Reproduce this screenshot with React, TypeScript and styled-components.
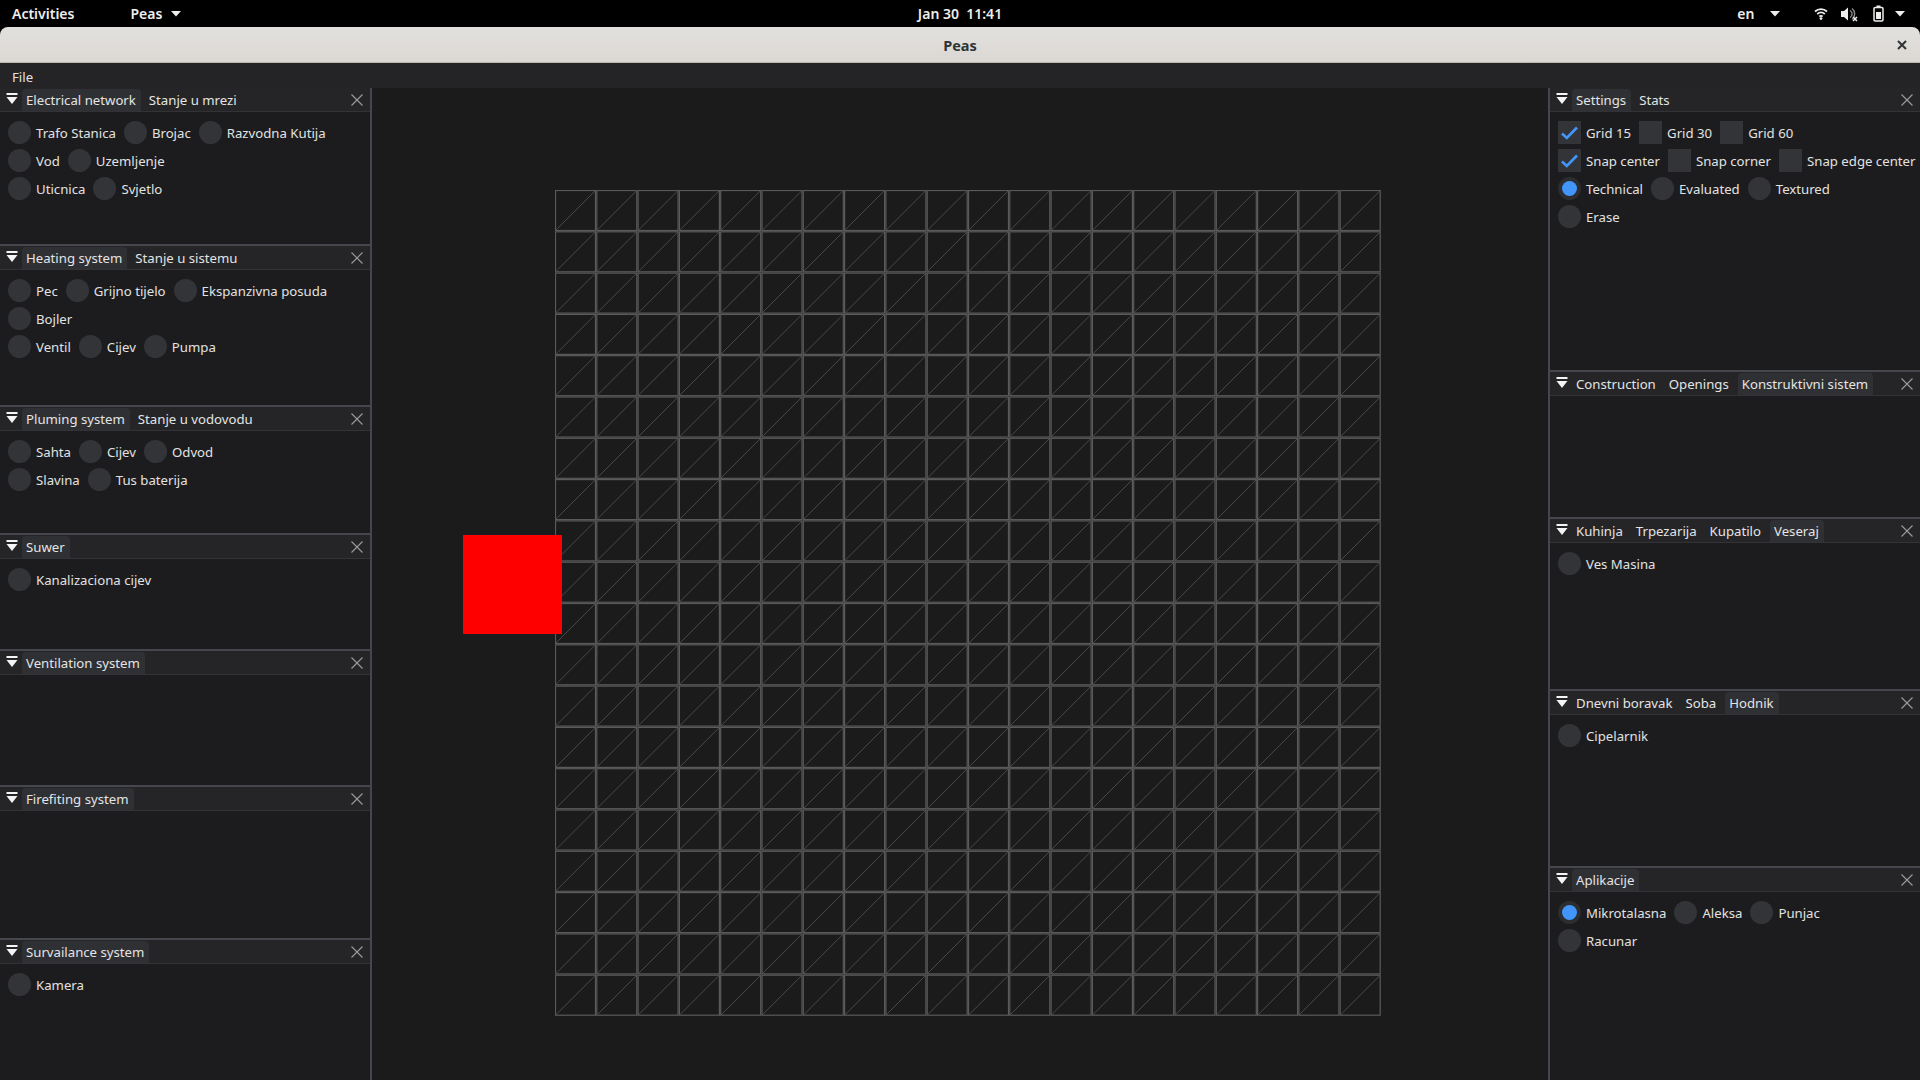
import React from "react";
import styled, { createGlobalStyle } from "styled-components";

const GlobalStyle = createGlobalStyle`
  html, body { margin: 0; padding: 0; background: #000; }
  body { font-family: "Noto Sans", "DejaVu Sans", sans-serif; }
  * { box-sizing: border-box; }
`;

const Screen = styled.div`
  width: 1920px;
  height: 1080px;
  display: flex;
  flex-direction: column;
  overflow: hidden;
  background: #000;
`;

const TopBar = styled.div`
  height: 27px;
  flex: none;
  display: grid;
  grid-template-columns: 1fr auto 1fr;
  align-items: center;
  color: #eeeeec;
  font-family: "Noto Sans", sans-serif;
  font-weight: 600;
  font-size: 14px;
`;

const TopLeft = styled.div`
  display: flex;
  align-items: center;
  padding-left: 12px;
  gap: 56px;
`;

const TopItem = styled.div`
  display: flex;
  align-items: center;
  gap: 5px;
  white-space: pre;
`;

const TopRight = styled.div`
  display: flex;
  align-items: center;
  justify-content: flex-end;
  padding-right: 15px;
`;

const TopGap = styled.div<{ $w: number }>`
  width: ${(p) => p.$w}px;
  flex: none;
`;

const Window = styled.div`
  flex: 1;
  display: flex;
  flex-direction: column;
  min-height: 0;
`;

const TitleBar = styled.div`
  height: 36px;
  flex: none;
  background: linear-gradient(#e2e0dd, #dbd8d4);
  border-radius: 8px 8px 0 0;
  border-bottom: 1px solid #bdb6af;
  display: grid;
  grid-template-columns: 1fr auto 1fr;
  align-items: center;
  color: #2e3436;
  font-family: "Noto Sans", sans-serif;
  font-weight: 700;
  font-size: 14.5px;
`;

const TitleClose = styled.div`
  justify-self: end;
  padding-right: 13px;
  display: flex;
  align-items: center;
`;

const MenuBar = styled.div`
  height: 25px;
  flex: none;
  background: #242426;
  display: flex;
  align-items: center;
  padding: 2px 0 0 12px;
  color: #e2e2e2;
  font-size: 13.2px;
`;

const Workspace = styled.div`
  flex: 1;
  display: flex;
  min-height: 0;
`;

const Dock = styled.div<{ $side: "left" | "right" }>`
  width: 372px;
  flex: none;
  display: flex;
  flex-direction: column;
  background: #1c1c1e;
  ${(p) =>
    p.$side === "left"
      ? "border-right: 2px solid #46464e;"
      : "border-left: 2px solid #46464e;"}
`;

const Panel = styled.section<{ $h?: number; $first?: boolean }>`
  ${(p) => (p.$h ? `height: ${p.$h}px; flex: none;` : "flex: 1;")}
  ${(p) => (p.$first ? "" : "border-top: 2px solid #46464e;")}
  display: flex;
  flex-direction: column;
  min-height: 0;
`;

const PanelHeader = styled.div`
  height: 24px;
  flex: none;
  background: #252527;
  border-bottom: 1px solid #333337;
  display: flex;
  align-items: flex-end;
  padding-left: 6px;
`;

const MenuButton = styled.div`
  width: 12px;
  height: 22px;
  margin-right: 4px;
  display: flex;
  align-items: center;
`;

const Tabs = styled.div`
  display: flex;
  gap: 4px;
  align-items: flex-end;
`;

const Tab = styled.div<{ $active?: boolean }>`
  height: 22px;
  line-height: 23px;
  padding: 0 5px 0 4px;
  border-radius: 4px 4px 0 0;
  background: ${(p) => (p.$active ? "#2f3034" : "transparent")};
  color: #e4e4e4;
  font-size: 13.2px;
  white-space: nowrap;
`;

const CloseButton = styled.div`
  margin-left: auto;
  margin-right: 7px;
  height: 22px;
  display: flex;
  align-items: center;
`;

const PanelBody = styled.div`
  padding: 9px 8px;
  display: flex;
  flex-direction: column;
  gap: 5px;
`;

const Row = styled.div`
  display: flex;
  align-items: center;
  gap: 8px;
  height: 23px;
`;

const Option = styled.div`
  display: flex;
  align-items: center;
  gap: 5px;
  color: #e2e2e2;
  font-size: 13.2px;
  white-space: nowrap;
`;

const RadioCircle = styled.div<{ $on?: boolean }>`
  width: 23px;
  height: 23px;
  border-radius: 50%;
  background: ${(p) => (p.$on ? "#2c2d30" : "#333438")};
  display: flex;
  align-items: center;
  justify-content: center;
  flex: none;
`;

const RadioDot = styled.div`
  width: 15px;
  height: 15px;
  border-radius: 50%;
  background: #4296fa;
`;

const CheckBox = styled.div`
  width: 23px;
  height: 23px;
  background: #333438;
  display: flex;
  align-items: center;
  justify-content: center;
  flex: none;
`;

const Canvas = styled.div`
  flex: 1;
  position: relative;
  background: #1b1b1b;
  padding: 102px 0 0 183px;
`;

const RedBlock = styled.div`
  position: absolute;
  left: 91px;
  top: 447px;
  width: 99px;
  height: 99px;
  background: #ff0000;
`;

/* ---------- icons ---------- */

const Caret = ({ color = "#eeeeec" }: { color?: string }) => (
  <svg width="10" height="6" viewBox="0 0 10 6">
    <path d="M0 0 H10 L5 5.5 Z" fill={color} />
  </svg>
);

const WifiIcon = () => (
  <svg width="14" height="13" viewBox="0 0 14 13">
    <path d="M1 4.5 A9 9 0 0 1 13 4.5" stroke="#eeeeec" strokeWidth="1.8" fill="none" />
    <path d="M3.2 7 A6 6 0 0 1 10.8 7" stroke="#eeeeec" strokeWidth="1.8" fill="none" />
    <path d="M5.3 9.4 A3 3 0 0 1 8.7 9.4" stroke="#eeeeec" strokeWidth="1.8" fill="none" />
    <circle cx="7" cy="11.6" r="1.4" fill="#eeeeec" />
  </svg>
);

const SpeakerIcon = () => (
  <svg width="18" height="16" viewBox="0 0 18 16">
    <path d="M1 5 H4 L8 1.5 V14.5 L4 11 H1 Z" fill="#eeeeec" />
    <path d="M10 4.5 A4 4 0 0 1 10 11.5" stroke="#8a8a8a" strokeWidth="1.4" fill="none" />
    <path d="M12 2.5 A7 7 0 0 1 12 13.5" stroke="#8a8a8a" strokeWidth="1.4" fill="none" />
    <path d="M13 11 L17 15 M17 11 L13 15" stroke="#eeeeec" strokeWidth="1.5" />
  </svg>
);

const BatteryIcon = () => (
  <svg width="11" height="17" viewBox="0 0 11 17">
    <rect x="3.5" y="0.5" width="4" height="2" fill="#eeeeec" />
    <rect x="1" y="2.5" width="9" height="13.5" rx="1.2" stroke="#eeeeec" strokeWidth="1.5" fill="none" />
    <rect x="3" y="7" width="5" height="7" fill="#eeeeec" />
  </svg>
);

const TitleX = () => (
  <svg width="10" height="10" viewBox="0 0 10 10">
    <path d="M1 1 L9 9 M9 1 L1 9" stroke="#2e3436" strokeWidth="2" />
  </svg>
);

const DockMenuIcon = () => (
  <svg width="12" height="14" viewBox="0 0 12 14">
    <rect x="0.5" y="0" width="11" height="2" fill="#f4f4f4" />
    <path d="M0.5 4 H11.5 L6 11 Z" fill="#f4f4f4" />
  </svg>
);

const PanelX = () => (
  <svg width="12" height="12" viewBox="0 0 12 12">
    <path d="M0.5 0.5 L11.5 11.5 M11.5 0.5 L0.5 11.5" stroke="#9c9c9c" strokeWidth="1.1" />
  </svg>
);

const CheckMark = () => (
  <svg width="23" height="23" viewBox="0 0 23 23">
    <path d="M4 12.5 L8.8 17 L19 6.5" stroke="#4296fa" strokeWidth="2.6" fill="none" strokeLinejoin="miter" />
  </svg>
);

/* ---------- grid ---------- */

const N = 20;
const PITCH = 41.3;
const Grid = () => {
  const cells: React.ReactNode[] = [];
  for (let r = 0; r < N; r++) {
    for (let c = 0; c < N; c++) {
      const x = c * PITCH + 0.5;
      const y = r * PITCH + 0.5;
      cells.push(
        <g key={`${r}-${c}`}>
          <rect x={x} y={y} width={40} height={40} fill="none" stroke="#5a5a5a" strokeWidth={1.2} />
          <line x1={x} y1={y + 40} x2={x + 40} y2={y} stroke="#4f4f4f" strokeWidth={0.9} />
        </g>
      );
    }
  }
  const size = Math.ceil(N * PITCH) + 2;
  return (
    <svg width={size} height={size} viewBox={`0 0 ${size} ${size}`}>
      {cells}
    </svg>
  );
};

/* ---------- data ---------- */

type Item = { label: string; kind?: "radio" | "check"; on?: boolean };
type PanelDef = {
  tabs: string[];
  active: number;
  rows: Item[][];
  h?: number;
};

const leftPanels: PanelDef[] = [
  {
    tabs: ["Electrical network", "Stanje u mrezi"],
    active: 0,
    h: 156,
    rows: [
      [{ label: "Trafo Stanica" }, { label: "Brojac" }, { label: "Razvodna Kutija" }],
      [{ label: "Vod" }, { label: "Uzemljenje" }],
      [{ label: "Uticnica" }, { label: "Svjetlo" }],
    ],
  },
  {
    tabs: ["Heating system", "Stanje u sistemu"],
    active: 0,
    h: 161,
    rows: [
      [{ label: "Pec" }, { label: "Grijno tijelo" }, { label: "Ekspanzivna posuda" }],
      [{ label: "Bojler" }],
      [{ label: "Ventil" }, { label: "Cijev" }, { label: "Pumpa" }],
    ],
  },
  {
    tabs: ["Pluming system", "Stanje u vodovodu"],
    active: 0,
    h: 128,
    rows: [
      [{ label: "Sahta" }, { label: "Cijev" }, { label: "Odvod" }],
      [{ label: "Slavina" }, { label: "Tus baterija" }],
    ],
  },
  { tabs: ["Suwer"], active: 0, h: 116, rows: [[{ label: "Kanalizaciona cijev" }]] },
  { tabs: ["Ventilation system"], active: 0, h: 136, rows: [] },
  { tabs: ["Firefiting system"], active: 0, h: 153, rows: [] },
  { tabs: ["Survailance system"], active: 0, rows: [[{ label: "Kamera" }]] },
];

const rightPanels: PanelDef[] = [
  {
    tabs: ["Settings", "Stats"],
    active: 0,
    h: 282,
    rows: [
      [
        { label: "Grid 15", kind: "check", on: true },
        { label: "Grid 30", kind: "check" },
        { label: "Grid 60", kind: "check" },
      ],
      [
        { label: "Snap center", kind: "check", on: true },
        { label: "Snap corner", kind: "check" },
        { label: "Snap edge center", kind: "check" },
      ],
      [{ label: "Technical", on: true }, { label: "Evaluated" }, { label: "Textured" }],
      [{ label: "Erase" }],
    ],
  },
  {
    tabs: ["Construction", "Openings", "Konstruktivni sistem"],
    active: 2,
    h: 147,
    rows: [],
  },
  {
    tabs: ["Kuhinja", "Trpezarija", "Kupatilo", "Veseraj"],
    active: 3,
    h: 172,
    rows: [[{ label: "Ves Masina" }]],
  },
  {
    tabs: ["Dnevni boravak", "Soba", "Hodnik"],
    active: 2,
    h: 177,
    rows: [[{ label: "Cipelarnik" }]],
  },
  {
    tabs: ["Aplikacije"],
    active: 0,
    rows: [
      [{ label: "Mikrotalasna", on: true }, { label: "Aleksa" }, { label: "Punjac" }],
      [{ label: "Racunar" }],
    ],
  },
];

const OptionItem = ({ item }: { item: Item }) => (
  <Option>
    {item.kind === "check" ? (
      <CheckBox>{item.on && <CheckMark />}</CheckBox>
    ) : (
      <RadioCircle $on={item.on}>{item.on && <RadioDot />}</RadioCircle>
    )}
    <span>{item.label}</span>
  </Option>
);

const DockPanel = ({ def, first }: { def: PanelDef; first: boolean }) => (
  <Panel $h={def.h} $first={first}>
    <PanelHeader>
      <MenuButton>
        <DockMenuIcon />
      </MenuButton>
      <Tabs>
        {def.tabs.map((t, i) => (
          <Tab key={t} $active={i === def.active}>
            {t}
          </Tab>
        ))}
      </Tabs>
      <CloseButton>
        <PanelX />
      </CloseButton>
    </PanelHeader>
    <PanelBody>
      {def.rows.map((row, ri) => (
        <Row key={ri}>
          {row.map((it) => (
            <OptionItem key={it.label} item={it} />
          ))}
        </Row>
      ))}
    </PanelBody>
  </Panel>
);

export default function App() {
  return (
    <>
      <GlobalStyle />
      <Screen>
        <TopBar>
          <TopLeft>
            <TopItem>Activities</TopItem>
            <TopItem>
              Peas <Caret />
            </TopItem>
          </TopLeft>
          <TopItem>{"Jan 30  11:41"}</TopItem>
          <TopRight>
            <TopItem>
              en <TopGap $w={2} />
              <Caret />
            </TopItem>
            <TopGap $w={34} />
            <WifiIcon />
            <TopGap $w={12} />
            <SpeakerIcon />
            <TopGap $w={15} />
            <BatteryIcon />
            <TopGap $w={11} />
            <Caret />
          </TopRight>
        </TopBar>
        <Window>
          <TitleBar>
            <span />
            <span>Peas</span>
            <TitleClose>
              <TitleX />
            </TitleClose>
          </TitleBar>
          <MenuBar>File</MenuBar>
          <Workspace>
            <Dock $side="left">
              {leftPanels.map((p, i) => (
                <DockPanel key={p.tabs[0]} def={p} first={i === 0} />
              ))}
            </Dock>
            <Canvas>
              <Grid />
              <RedBlock />
            </Canvas>
            <Dock $side="right">
              {rightPanels.map((p, i) => (
                <DockPanel key={p.tabs[0]} def={p} first={i === 0} />
              ))}
            </Dock>
          </Workspace>
        </Window>
      </Screen>
    </>
  );
}
